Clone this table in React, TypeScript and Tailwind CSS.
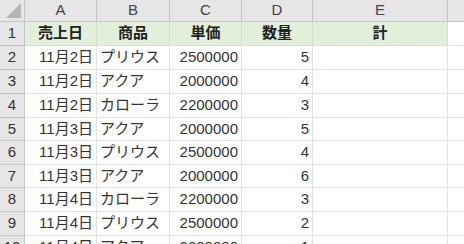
const cols = ['A', 'B', 'C', 'D', 'E', 'F'];

const rows: [string, string, string, string][] = [
  ['11月2日', 'プリウス', '2500000', '5'],
  ['11月2日', 'アクア', '2000000', '4'],
  ['11月2日', 'カローラ', '2200000', '3'],
  ['11月3日', 'アクア', '2000000', '5'],
  ['11月3日', 'プリウス', '2500000', '4'],
  ['11月3日', 'アクア', '2000000', '6'],
  ['11月4日', 'カローラ', '2200000', '3'],
  ['11月4日', 'プリウス', '2500000', '2'],
  ['11月4日', 'アクア', '2000000', '1'],
];

// row 1 is the header row, then data rows 2..10
const rowHeights = ['h-[24px]', 'h-[24px]', 'h-[24px]', 'h-[24px]', 'h-[23px]', 'h-[24px]', 'h-[23px]', 'h-[24px]', 'h-[24px]', 'h-[24px]'];

function RowHead({ n, h }: { n: number; h: string }) {
  return (
    <div className={`${h} flex items-center justify-center border-r border-b border-[#c6c6c6] bg-[#e6e6e6] text-[15px] text-[#333]`}>
      {n}
    </div>
  );
}

export default function App() {
  return (
    <div
      className="w-[464px] h-[244px] overflow-hidden bg-white"
      style={{ fontFamily: '"Liberation Sans", "Noto Sans CJK JP", sans-serif' }}
    >
      <div className="grid grid-cols-[25px_72px_73px_72px_71px_135px_72px] w-[500px]">
        {/* column headers */}
        <div className="h-[22px] relative border-r border-b border-[#c6c6c6] bg-[#e6e6e6]">
          <div className="absolute right-[3px] bottom-[3px] w-0 h-0 border-l-[15px] border-l-transparent border-b-[15px] border-b-[#b5b5b5]" />
        </div>
        {cols.map((c) => (
          <div
            key={c}
            className="h-[22px] flex items-center justify-center border-r border-b border-[#c6c6c6] bg-[#e6e6e6] text-[15px] text-[#444]"
          >
            {c}
          </div>
        ))}

        {/* row 1 */}
        <RowHead n={1} h={rowHeights[0]} />
        {['売上日', '商品', '単価', '数量', '計'].map((t) => (
          <div
            key={t}
            className="h-[24px] flex items-center justify-center border-r border-b border-[#d4dfcd] bg-[#e2efda] text-[15px] font-bold text-[#222]"
          >
            {t}
          </div>
        ))}
        <div className="h-[24px] border-r border-b border-[#e1e1e1]" />

        {rows.map((r, i) => {
          const h = rowHeights[i + 1];
          return (
            <div key={i} className="contents">
              <RowHead n={i + 2} h={h} />
              <div className={`${h} flex items-center justify-end pr-[3px] border-r border-b border-[#e1e1e1] text-[15px] text-[#333]`}>
                {r[0]}
              </div>
              <div className={`${h} flex items-center pl-[3px] border-r border-b border-[#e1e1e1] text-[15px] text-[#333] whitespace-nowrap`}>
                {r[1]}
              </div>
              <div className={`${h} flex items-center justify-end pr-[3px] border-r border-b border-[#e1e1e1] text-[15px] text-[#333]`}>
                {r[2]}
              </div>
              <div className={`${h} flex items-center justify-end pr-[3px] border-r border-b border-[#e1e1e1] text-[15px] text-[#333]`}>
                {r[3]}
              </div>
              <div className={`${h} border-r border-b border-[#e1e1e1]`} />
              <div className={`${h} border-r border-b border-[#e1e1e1]`} />
            </div>
          );
        })}
      </div>
    </div>
  );
}
